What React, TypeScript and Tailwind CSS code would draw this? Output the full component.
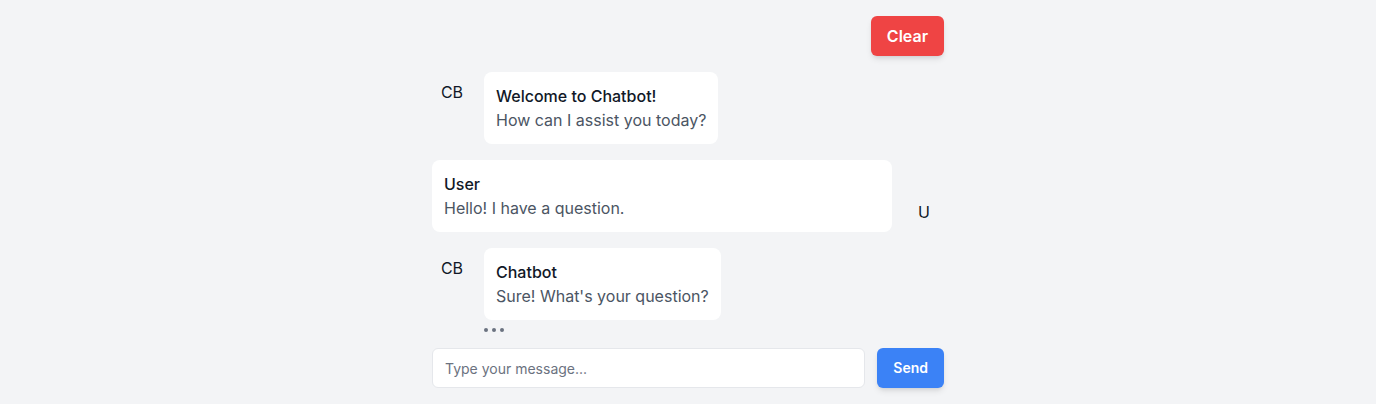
import React, { useState } from 'react';

type Message = {
    id: number;
    from: 'bot' | 'user';
    title: string;
    text: string;
};

const initialMessages: Message[] = [
    { id: 1, from: 'bot', title: 'Welcome to Chatbot!', text: 'How can I assist you today?' },
    { id: 2, from: 'user', title: 'User', text: 'Hello! I have a question.' },
    { id: 3, from: 'bot', title: 'Chatbot', text: "Sure! What's your question?" },
];

const ChatApp: React.FC = () => {
    const [messages, setMessages] = useState<Message[]>(initialMessages);
    const [input, setInput] = useState('');

    const send = () => {
        if (!input.trim()) return;
        setMessages(prev => [...prev, { id: Date.now(), from: 'user', title: 'User', text: input }]);
        setInput('');
    };

    return (
        <div className="min-h-screen bg-[#f3f4f6] p-4 font-['Inter',sans-serif]">
            <div className="max-w-lg mx-auto">
                <div className="flex justify-end mb-4">
                    <button
                        onClick={() => setMessages([])}
                        className="px-4 py-2 bg-[#ef4444] text-white font-semibold rounded-md shadow-md hover:bg-[#dc2626]"
                    >
                        Clear
                    </button>
                </div>

                <div className="flex flex-col gap-4">
                    {messages.map(msg =>
                        msg.from === 'bot' ? (
                            <div key={msg.id} className="flex items-start">
                                <div className="w-10 h-10 flex items-center justify-center text-[#111827] shrink-0 mr-3">CB</div>
                                <div className="bg-white rounded-lg p-3">
                                    <p className="font-medium text-[#111827]">{msg.title}</p>
                                    <p className="text-[#4b5563]">{msg.text}</p>
                                </div>
                            </div>
                        ) : (
                            <div key={msg.id} className="flex items-end">
                                <div className="flex-1 bg-white rounded-lg p-3">
                                    <p className="font-medium text-[#111827]">{msg.title}</p>
                                    <p className="text-[#4b5563]">{msg.text}</p>
                                </div>
                                <div className="w-10 h-10 flex items-center justify-center text-[#111827] shrink-0 ml-3">U</div>
                            </div>
                        )
                    )}
                </div>

                {/* typing indicator */}
                <div className="flex gap-1 ml-[52px] mt-2 mb-4 h-1 items-center">
                    <span className="w-1 h-1 rounded-full bg-[#6b7280]" />
                    <span className="w-1 h-1 rounded-full bg-[#6b7280]" />
                    <span className="w-1 h-1 rounded-full bg-[#6b7280]" />
                </div>

                <div className="flex gap-3">
                    <input
                        type="text"
                        value={input}
                        onChange={e => setInput(e.target.value)}
                        placeholder="Type your message..."
                        className="flex-1 h-10 px-3 text-sm bg-white border border-[#e5e7eb] rounded-md placeholder-[#6b7280] focus:outline-none"
                    />
                    <button
                        onClick={send}
                        className="px-4 h-10 bg-[#3b82f6] text-white text-sm font-semibold rounded-md shadow-md hover:bg-[#2563eb]"
                    >
                        Send
                    </button>
                </div>
            </div>
        </div>
    );
};

export default ChatApp;
